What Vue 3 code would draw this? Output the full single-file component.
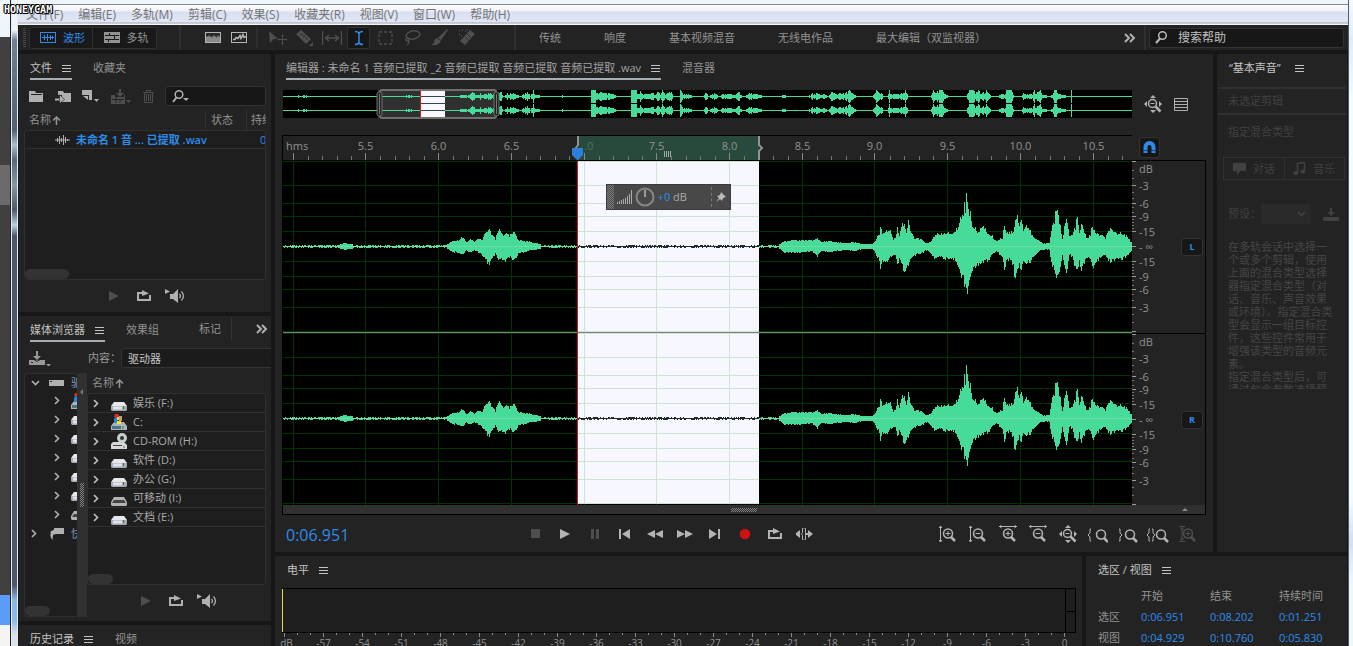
<script setup>
import { h, ref } from 'vue'

const menus = ['文件(F)', '编辑(E)', '多轨(M)', '剪辑(C)', '效果(S)', '收藏夹(R)', '视图(V)', '窗口(W)', '帮助(H)']
const workspaces = ['传统', '响度', '基本视频混音', '无线电作品', '最大编辑（双监视器）']
const search = ref('')
const fileFilter = ref('')

const glass = '<circle cx="9" cy="8.500" r="4.500" fill="none" stroke="currentColor" stroke-width="1.500"/><path d="M12 12l4 4" stroke="currentColor" stroke-width="2.500"/>'
const plus = '<path d="M6.500 8.500h5M9 6v5" stroke="currentColor" stroke-width="1"/>'
const minus = '<path d="M6.500 8.500h5" stroke="currentColor" stroke-width="1"/>'
const vArrow = '<path d="M1.500 1v16M0 3l1.500-2 1.500 2M0 15l1.500 2 1.500-2" fill="none" stroke="currentColor"/>'
const hArrow = '<path d="M0 1.500h18M2.500 0L.5 1.500l2 1.500M15.500 0l2 1.500-2 1.500" fill="none" stroke="currentColor"/>'
const fullZoom = '<path d="M6 3l3-3 3 3zM6 15l3 3 3-3zM3 6L0 9l3 3zM15 6l3 3-3 3z" fill="currentColor"/><circle cx="8.500" cy="8.500" r="4" fill="none" stroke="currentColor" stroke-width="1.500"/><path d="M6.500 8.500h4" stroke="currentColor"/><path d="M11.500 11.500l5 5" stroke="currentColor" stroke-width="2.500"/>'

const icons = {
  burger: [10, 9, '<path d="M0 1.500h9M0 4.500h9M0 7.500h9" stroke="currentColor"/>'],
  wave: [16, 11, '<rect x=".5" y=".5" width="15" height="10" fill="none" stroke="currentColor"/><path d="M2 5.500h12M4.500 3v5M7.500 2v7M10.500 3v5M12.500 4v3" stroke="currentColor"/>'],
  multi: [16, 11, '<path d="M0 0h16v11H0z" fill="currentColor"/><path d="M1 3.500h14M1 7.500h14M5.500 1v3M10.500 4v4M4.500 7v3" stroke="#191919"/>'],
  spectrum: [16, 11, '<rect x=".5" y=".5" width="15" height="10" fill="#8a8a8a" stroke="currentColor"/><path d="M1 1h14v3l-1 1-1-2-1 3-1-2-1 1-1-2-1 1-1 2-1-2-1 1-1-2-1 2-1-1-1 1z" fill="#2a2a2a"/>'],
  pitch: [16, 11, '<rect x=".5" y=".5" width="15" height="10" fill="none" stroke="currentColor"/><path d="M2 7.500h2l1-2 2 1 2-3 1 3 2-4 1 3 2-1" fill="none" stroke="currentColor" stroke-width="1.500"/>'],
  move: [18, 16, '<path d="M0 1l9 8H4.500L1 13z" fill="currentColor"/><path d="M13.500 5.500v8M9.500 9.500h8" stroke="currentColor"/><path d="M12 6l1.500-2L15 6zM12 13l1.500 2 1.500-2zM10 8L8.500 9.500 10 11zM17 8l1.500 1.500L17 11z" fill="currentColor"/>'],
  razor: [17, 17, '<path d="M0 5l5-4 10 9-5 5z" fill="currentColor"/><path d="M5 5l1 1M7.500 7l1 1M10 9l1 1" stroke="#222" stroke-width="1.500"/><path d="M17 13v4h-4z" fill="currentColor"/>'],
  slip: [20, 14, '<path d="M.5 0v14M19.500 0v14M3 7h14M7 4L3.500 7 7 10M13 4l3.500 3L13 10" fill="none" stroke="currentColor" stroke-width="1.400"/>'],
  ibeam: [10, 16, '<path d="M1 1.500q3.500 0 4 2 .5-2 4-2M1 14.500q3.500 0 4-2 .5 2 4 2M5 3v10" fill="none" stroke="currentColor" stroke-width="1.500"/>'],
  marquee: [16, 14, '<rect x="1" y="1" width="13" height="12" fill="none" stroke="currentColor" stroke-width="1.300" stroke-dasharray="3 2"/>'],
  lasso: [17, 15, '<ellipse cx="9" cy="5" rx="7" ry="4" fill="none" stroke="currentColor" stroke-width="1.500" transform="rotate(-12 9 5)"/><path d="M4 8q-4 2-1 3 3 0 1-3 2 5-1 7" fill="none" stroke="currentColor" stroke-width="1.300"/>'],
  brush: [17, 17, '<path d="M16 0l1 1-7 10-3-2z" fill="currentColor"/><path d="M6 9l4 3q-2 5-10 4 3-1 3-3 0-3 3-4z" fill="currentColor"/>'],
  heal: [18, 17, '<path d="M2 12L12 1l5 4L7 16z" fill="currentColor"/><path d="M7 7.500l4 4M9 5l4 4" stroke="#222" stroke-width=".7"/><path d="M1 2h1M4 1h1M7 2h1M1 5h1M3 7h1M9 1h1" stroke="currentColor" stroke-width="1.300"/>'],
  chevrons: [12, 10, '<path d="M1 1l4 4-4 4M6 1l4 4-4 4" fill="none" stroke="currentColor" stroke-width="2"/>'],
  search: [13, 13, '<circle cx="7.500" cy="4.500" r="3.800" fill="none" stroke="currentColor" stroke-width="1.500"/><path d="M5 7.500L1 12" stroke="currentColor" stroke-width="2"/>'],
  searchMenu: [18, 13, '<circle cx="7" cy="4.500" r="3.800" fill="none" stroke="currentColor" stroke-width="1.500"/><path d="M4.500 7.500L1 12" stroke="currentColor" stroke-width="2"/><path d="M11 8h6l-3 3z" fill="currentColor"/>'],
  folder: [15, 12, '<path d="M0 1h6l1 2h7v9H0z" fill="currentColor"/><path d="M2 4.500h11" stroke="#222"/>'],
  importFile: [16, 13, '<path d="M3 1h5l1 2h7v9H7V5H3z" fill="currentColor"/><path d="M0 9.500h6" stroke="currentColor" stroke-width="2"/><path d="M4.500 4.500l5 5-5 4z" fill="currentColor" stroke="#232323" stroke-width=".6"/>'],
  newFile: [18, 14, '<path d="M0 1h10v10H7V6H0z" fill="currentColor"/><path d="M1 7l5 4V7z" fill="currentColor"/><path d="M12 10h5l-2.500 3z" fill="currentColor"/>'],
  insert: [21, 15, '<path d="M0 6h4v2h9V6h1v9H0z" fill="currentColor"/><path d="M1 10.500h12M5 8v6M9 10v4" stroke="#222"/><path d="M8 0h2v4h3L9 8 5 4h3z" fill="currentColor"/><path d="M15 11h5l-2.500 3z" fill="currentColor"/>'],
  trash: [11, 13, '<path d="M0 2.500h11M3.500 2V.5h4V2M1.500 3v9.500h8V3M3.500 4v7M5.500 4v7M7.500 4v7" fill="none" stroke="currentColor"/>'],
  sound: [15, 12, '<path d="M0 6h15M2.500 4v4M4.500 2v8M6.500 4v4M8.500 1v10M10.500 3v6M12.500 5v2" stroke="currentColor" stroke-width="1"/>'],
  play: [10, 10, '<path d="M0 0l10 5-10 5z" fill="currentColor"/>'],
  stop: [9, 9, '<path d="M0 0h9v9H0z" fill="currentColor"/>'],
  pause: [9, 10, '<path d="M0 0h3v10H0zM5 0h3v10H5z" fill="currentColor"/>'],
  toStart: [12, 10, '<path d="M0 0h2v10H0zM11 0v10L3 5z" fill="currentColor"/>'],
  toEnd: [12, 10, '<path d="M9 0h2v10H9zM0 0v10l8-5z" fill="currentColor"/>'],
  rewind: [16, 8, '<path d="M8 0v8L0 4zM16 0v8L8 4z" fill="currentColor"/>'],
  forward: [16, 8, '<path d="M0 0v8l8-4zM8 0v8l8-4z" fill="currentColor"/>'],
  record: [12, 12, '<circle cx="6" cy="6" r="5.300" fill="#cc1313"/>'],
  loop: [14, 12, '<path d="M5 3H1v7h12V5" fill="none" stroke="currentColor" stroke-width="2"/><path d="M5 0l7 3.500L5 6z" fill="currentColor"/>'],
  skip: [18, 12, '<path d="M0 5l4-3v8L0 7zM12 2l5 4-5 4z" fill="currentColor"/><path d="M9 6h4" stroke="currentColor" stroke-width="2"/><path d="M7.500.5h-1v4L5.500 6l1 1.500v4h1M8.500.5h1v4l1 1.500-1 1.500v4h-1" fill="none" stroke="currentColor"/>'],
  speaker: [21, 14, '<path d="M0 0l5 2.500L0 5z" fill="currentColor"/><path d="M5 5h3l5-5v14l-5-4H5z" fill="currentColor"/><path d="M14.500 5q2 2 0 4M16.500 2.500q4 4.500 0 9" fill="none" stroke="currentColor" stroke-width="1.300"/>'],
  importDown: [22, 15, '<path d="M0 9h16v5H0z" fill="currentColor"/><path d="M2 11.500h2" stroke="#222"/><path d="M7 0h2v5h3L8 9 4 5h3z" fill="currentColor"/><path d="M3 8.500h2l3 2 3-2h2" stroke="#222" fill="none"/><path d="M17 13h5l-2.500 2.500z" fill="currentColor"/>'],
  saveDown: [16, 13, '<path d="M0 9h16v4H0z" fill="currentColor"/><path d="M7 0h2v4h3L8 8 4 4h3z" fill="currentColor"/>'],
  right: [6, 9, '<path d="M1 1l3.500 3.500L1 8" fill="none" stroke="currentColor" stroke-width="1.600"/>'],
  down: [9, 6, '<path d="M1 1l3.500 3.500L8 1" fill="none" stroke="currentColor" stroke-width="1.600"/>'],
  up: [9, 9, '<path d="M4.500 9V1M1 4.500L4.500 1 8 4.500" fill="none" stroke="currentColor" stroke-width="1.600"/>'],
  hdd: [15, 6, '<rect width="15" height="6" fill="currentColor"/><path d="M1 1.500h2" stroke="#222"/>'],
  shortcut: [14, 12, '<path d="M4 0h10v6H5z" fill="currentColor"/><path d="M0 4l5-3v6L4 6q-2 2-1 6-4-3-2-7z" fill="currentColor"/>'],
  drive: [16, 10, '<path d="M3 1h10l3 4H0z" fill="#e8e8ec"/><path d="M0 5h16v4l-1 1H1L0 9z" fill="#a9a9ad"/><path d="M2 5.500h9v3H2z" fill="#dfe2f4"/><path d="M12.500 5v3" stroke="#278b58"/>'],
  system: [16, 16, '<path d="M3 8h10l3 4v4H0v-4z" fill="#aeb4b8"/><path d="M1 12h9v3H1z" fill="#44758f"/><path d="M12 12v3" stroke="#3f7a64"/><path d="M3 9V5l2-3 3 7z" fill="#2985e0"/><path d="M4 0h3l2 3H3z" fill="#e32c20"/><path d="M6 3h2v3H6z" fill="#f5d531"/><path d="M8 2h3v5H8z" fill="#bba379"/><path d="M6 7h4v3H6z" fill="#ffe318"/>'],
  cdrom: [16, 16, '<path d="M2 9h11l3 3v4H0v-5z" fill="#d8d8d8"/><circle cx="11" cy="5" r="5" fill="#c9cccc"/><circle cx="11" cy="5" r="2" fill="#233a30"/><path d="M2 12.500h9" stroke="#444"/><path d="M12 14h2" stroke="#278b58"/>'],
  removable: [16, 10, '<path d="M3 1h10l3 5v3l-1 1H1L0 9V6z" fill="#b2b2b2"/><path d="M3 4h10l2 3H1z" fill="#444"/>'],
  zoomInV: [18, 18, vArrow + glass + plus],
  zoomOutV: [18, 18, vArrow + glass + minus],
  zoomInH: [18, 18, hArrow + glass + plus],
  zoomOutH: [18, 18, hArrow + glass + minus],
  zoomFull: [18, 18, fullZoom],
  zoomLeft: [20, 18, '<path d="M3 4H2v4L0 10l2 2v4h1" fill="none" stroke="currentColor"/><g transform="translate(4 1)">' + glass + '</g>'],
  zoomRight: [20, 18, '<path d="M1 4h1v4l2 2-2 2v4H1" fill="none" stroke="currentColor"/><g transform="translate(3 1)">' + glass + '</g>'],
  zoomSel: [22, 18, '<path d="M3 4H2v4L0 10l2 2v4h1M5 4h1v4l2 2-2 2v4H5" fill="none" stroke="currentColor"/><g transform="translate(5 1)">' + glass + '</g>'],
  zoomReset: [18, 18, '<path d="M0 1.500h6M0 16.500h6M3 2v14M1.500 5L3 3l1.500 2M1.500 13L3 15l1.500-2" fill="none" stroke="currentColor"/>' + glass + plus],
  list: [14, 13, '<path d="M.5.5h13v12H.5zM0 3.500h14M0 6.500h14M0 9.500h14" fill="none" stroke="currentColor"/>'],
  magnet: [13, 13, '<path d="M2.500 12V6a4 4 0 018 0v6" fill="none" stroke="currentColor" stroke-width="4"/><path d="M0 9.500h5M8 9.500h5" stroke="#173f73" stroke-width="1"/>'],
  bubble: [13, 12, '<path d="M0 0h13v8H7l-3 4V8H0z" fill="currentColor"/>'],
  note: [13, 13, '<path d="M4.500 11V1.500l7-1V9" fill="none" stroke="currentColor" stroke-width="1.500"/><ellipse cx="2.800" cy="11" rx="2.600" ry="2" fill="currentColor"/><ellipse cx="9.800" cy="9.500" rx="2.600" ry="2" fill="currentColor"/>'],
  bars: [15, 14, '<path d="M.5 12v2M2.500 11v3M4.500 10v4M6.500 9v5M8.500 8v6M10.500 6v8M12.500 4v10M14.500 0v14" stroke="currentColor"/>'],
  knob: [20, 20, '<circle cx="10" cy="10" r="8.500" fill="none" stroke="#888" stroke-width="2"/><path d="M10 3v7" stroke="#999" stroke-width="2"/>'],
  pin: [10, 10, '<path d="M5 0l5 5-2 .5-1.500 1.500-.5 2-2-2-4 3 3-4-2-2 2-.5L4.500 2z" fill="currentColor"/>'],
}

const Icon = (props) => {
  const [w, ht, body] = icons[props.name]
  return h('svg', { class: 'icon', width: w, height: ht, viewBox: `0 0 ${w} ${ht}`, 'aria-hidden': 'true', innerHTML: body })
}
Icon.props = ['name']

const tools = ['move', 'razor', 'slip', 'ibeam', 'marquee', 'lasso', 'brush', 'heal']
const drives = [
  ['drive', '娱乐 (F:)'], ['system', 'C:'], ['cdrom', 'CD-ROM (H:)'], ['drive', '软件 (D:)'],
  ['drive', '办公 (G:)'], ['removable', '可移动 (I:)'], ['drive', '文档 (E:)'],
]
const treeDrives = ['system', 'drive', 'drive', 'drive', 'drive', 'drive', 'removable']
const transport = [
  ['stop', '停止', true], ['play', '播放'], ['pause', '暂停', true], ['toStart', '移到开头'], ['rewind', '快退'],
  ['forward', '快进'], ['toEnd', '移到结尾'], ['record', '录制'], ['loop', '循环'], ['skip', '跳过选区'],
]
const zooms = [
  ['zoomInV', '放大振幅'], ['zoomOutV', '缩小振幅'], ['zoomInH', '放大时间'], ['zoomOutH', '缩小时间'], ['zoomFull', '全部缩小'],
  ['zoomLeft', '放大入点'], ['zoomRight', '放大出点'], ['zoomSel', '缩放至选区'], ['zoomReset', '重置缩放', true],
]
const helpLines = [
  '在多轨会话中选择一', '个或多个剪辑，使用', '上面的混合类型选择', '器指定混合类型（对', '话、音乐、声音效果',
  '或环境）。指定混合类', '型会显示一组目标控', '件，这些控件常用于', '增强该类型的音频元', '素。', '指定混合类型后，可', '通过包含参数选择预',
]
const ranges = [
  ['选区', '0:06.951', '0:08.202', '0:01.251'],
  ['视图', '0:04.929', '0:10.760', '0:05.830'],
]

/* Time axis, 849 units wide */
const W = 849
const X0 = 283
const gridX = [293, 365, 438, 511, 584, 656, 729, 802, 874, 947, 1020, 1093].map((x) => x - X0 + 0.5)
const timeLabels = gridX.map((x, i) => ({ x, text: (5 + i / 2).toFixed(1) })).slice(1).filter((t) => t.text !== '7.0')
const minorX = []
for (let i = 1; i < 58; i++) if (i % 5) minorX.push(Math.round(10 + i * 14.55) + 0.5)
const pct = (x) => `${(x / W) * 100}%`

/* Amplitude axis */
const gridDb = [-85, -61, -43, -30, -15, 0, 15, 30, 43, 61, 85]
const dbLabels = [[-77, 'dB'], [-60, '-3'], [-42, '-6'], [-29, '-9'], [-14, '-15'], [1, '- ∞'], [16, '-15'], [31, '-9'], [44, '-6'], [62, '-3']]
const dbMinor = [-76, -68, -54, -48, -39, -34, -27, -24, -21, -18, 18, 21, 24, 27, 34, 39, 48, 54, 68, 76]

const envelope = [
  [283, 1, 1], [335, 1, 1], [340, 2, 2], [345, 3, 3], [352, 2, 2], [362, 1, 1], [442, 1, 1], [447, 2, 2], [452, 5, 5], [458, 6, 6],
  [462, 9, 9], [466, 4, 4], [470, 7, 6], [474, 4, 3], [478, 8, 6], [481, 6, 7], [484, 11, 11], [488, 17, 18], [491, 13, 14], [495, 7, 7],
  [498, 17, 14], [500, 15, 12], [503, 12, 14], [505, 14, 16], [509, 10, 10], [512, 13, 12], [515, 13, 13], [518, 7, 6], [522, 5, 6],
  [528, 5, 4], [535, 3, 3], [545, 1, 1], [577, 1, 1], [775, 1, 1], [779, 2, 2], [784, 5, 6], [788, 6, 6], [800, 6, 6], [812, 6, 5],
  [817, 8, 9], [820, 5, 5], [830, 5, 5], [845, 3, 3], [855, 4, 4], [862, 2, 2], [872, 2, 2], [874, 4, 4], [877, 10, 11], [879, 13, 13],
  [880, 22, 26], [882, 14, 15], [886, 17, 16], [890, 16, 11], [893, 7, 9], [895, 9, 9], [897, 19, 18], [899, 12, 12], [901, 22, 19],
  [904, 24, 26], [906, 14, 20], [908, 24, 20], [911, 13, 11], [915, 8, 8], [920, 7, 7], [927, 3, 3], [931, 5, 8], [935, 13, 13],
  [940, 11, 10], [945, 14, 13], [952, 12, 12], [955, 16, 14], [957, 18, 18], [959, 27, 24], [961, 31, 30], [963, 34, 31], [964, 42, 38],
  [965, 34, 36], [966, 60, 50], [967, 53, 50], [968, 37, 49], [969, 31, 35], [970, 37, 32], [972, 22, 24], [976, 16, 20], [980, 18, 16],
  [985, 19, 15], [988, 12, 15], [991, 11, 8], [996, 5, 4], [1002, 9, 10], [1004, 23, 24], [1006, 15, 13], [1010, 14, 14], [1013, 16, 19],
  [1015, 29, 37], [1017, 31, 22], [1019, 22, 18], [1021, 26, 24], [1023, 18, 15], [1026, 22, 16], [1030, 15, 15], [1034, 8, 8],
  [1038, 6, 5], [1042, 3, 3], [1049, 3, 3], [1051, 17, 17], [1054, 27, 24], [1056, 38, 37], [1058, 30, 30], [1060, 20, 20], [1062, 8, 8],
  [1065, 26, 26], [1067, 24, 22], [1069, 10, 8], [1072, 12, 11], [1075, 20, 24], [1077, 30, 24], [1079, 13, 13], [1081, 23, 26],
  [1084, 14, 17], [1087, 8, 10], [1090, 11, 12], [1092, 22, 21], [1095, 13, 15], [1100, 12, 11], [1105, 8, 9], [1109, 18, 15],
  [1113, 14, 14], [1118, 13, 12], [1123, 14, 12], [1127, 9, 9], [1131, 4, 4],
]
const overview = [
  [283, 0.5], [290, 1], [305, 1.5], [310, 0.5], [352, 1], [366, 1], [376, 0.5], [403, 0.5], [409, 2], [414, 0.5], [445, 0.5], [458, 1],
  [462, 3], [467, 2], [473, 5], [476, 2], [480, 4], [483, 2], [487, 4], [492, 3], [497, 3], [500, 6], [503, 1], [507, 4], [514, 4],
  [520, 1], [527, 5], [530, 2], [533, 7], [535, 3], [540, 1], [560, 0.5], [563, 2], [566, 0.5], [590, 0.5], [591, 7], [595, 7], [596, 4],
  [601, 6], [605, 4], [612, 4], [616, 1], [630, 1], [631, 7], [636, 7], [637, 4], [640, 6], [644, 3], [648, 3], [651, 5], [654, 3], [658, 6],
  [660, 3], [662, 7], [665, 4], [671, 5], [673, 1], [679, 1], [680, 7], [683, 3], [690, 2], [694, 1], [703, 0.5], [706, 5], [709, 1],
  [715, 4], [718, 1], [724, 3], [733, 3], [739, 5], [742, 1], [745, 1], [748, 4], [752, 4], [757, 3], [763, 1], [780, 0.5], [784, 3],
  [788, 0.5], [808, 0.5], [812, 4], [820, 3], [825, 3], [828, 1], [832, 6], [835, 3], [838, 3], [842, 5], [844, 3], [849, 7], [853, 4],
  [856, 1], [870, 0.5], [874, 3], [876, 7], [880, 5], [883, 1], [887, 1], [889, 7], [891, 3], [896, 5], [899, 2], [902, 4], [905, 7],
  [908, 1], [930, 0.5], [933, 7], [936, 6], [939, 7], [942, 7], [945, 3], [950, 1], [966, 0.5], [969, 7], [973, 7], [975, 5], [978, 7],
  [981, 3], [986, 7], [989, 3], [992, 1], [998, 1], [1001, 4], [1004, 2], [1006, 7], [1011, 7], [1013, 2], [1015, 0.5], [1021, 1],
  [1023, 4], [1032, 3], [1034, 7], [1036, 4], [1040, 7], [1042, 3], [1048, 1], [1052, 2], [1054, 7], [1056, 7], [1058, 3], [1063, 2],
  [1068, 0.5], [1070, 1], [1071, 7], [1072, 0.5], [1131, 0.5],
]
const jitter = (n) => { const v = Math.sin(n * 12.9898) * 43758.5453; return v - Math.floor(v) }
function at(points, x, k) {
  let i = 1
  while (i < points.length - 1 && points[i][0] < x) i++
  const a = points[i - 1]
  const b = points[i]
  return a[k] + (b[k] - a[k]) * Math.min(1, Math.max(0, (x - a[0]) / (b[0] - a[0])))
}
function reach(v, n) {
  if (v < 2) return Math.round(jitter(n) * 0.9)
  return Math.round(v * (0.8 + jitter(n) * 0.28))
}
function wavePath(from, to, cy) {
  let d = ''
  for (let x = from; x <= to; x++) {
    d += `M${x - X0 + 0.5} ${cy - reach(at(envelope, x, 1), x)}V${cy + 1 + reach(at(envelope, x, 2), x + 77)}`
  }
  return d
}
function overviewPath(cy) {
  let d = ''
  for (let x = 283; x < 1132; x++) {
    const v = at(overview, x, 1)
    const a = v >= 6.8 ? 6.5 : 0.5 + Math.round(Math.max(0, v * (0.5 + jitter(x * 3) * 0.5) - 0.7))
    d += `M${x - X0 + 0.5} ${cy - a}V${cy + a}`
  }
  return d
}
const channels = [85, 257]
const waves = channels.map((c) => ({
  c,
  left: wavePath(283, 576, c),
  mid: wavePath(578, 758, c),
  right: wavePath(759, 1131, c),
}))
const overviewPaths = [overviewPath(6.5), overviewPath(20.5)]

/* Level meter axis */
const levelTicks = []
for (let i = 0; i <= 60; i++) levelTicks.push({ x: 2.5 + i * 13, major: i % 3 === 0 })
const levelLabels = []
for (let i = 0; i <= 20; i++) levelLabels.push({ x: 2.5 + i * 39 + (i === 0 ? 2 : 0), text: i === 0 ? 'dB' : i === 20 ? '0' : String(-60 + i * 3) })
</script>

<template>
  <div class="desktop">
    <div class="behind"></div>
    <div class="edge"></div>
    <div class="app">
      <nav class="menubar">
        <button v-for="m in menus" :key="m">{{ m }}</button>
      </nav>

      <header class="toolbar">
        <i class="grip"></i>
        <div class="modes">
          <button class="mode on"><Icon name="wave" />波形</button>
          <button class="mode"><Icon name="multi" />多轨</button>
        </div>
        <i class="bar first"></i>
        <button class="view" aria-label="频谱"><Icon name="spectrum" /></button>
        <button class="view" aria-label="音高"><Icon name="pitch" /></button>
        <i class="bar second"></i>
        <div class="tools">
          <button v-for="t in tools" :key="t" :class="{ on: t === 'ibeam' }" :aria-label="t"><Icon :name="t" /></button>
        </div>
        <i class="bar"></i>
        <nav class="spaces">
          <button v-for="w in workspaces" :key="w">{{ w }}</button>
        </nav>
        <button class="more" aria-label="更多工作区"><Icon name="chevrons" /></button>
        <i class="bar"></i>
        <label class="help"><Icon name="search" /><input v-model="search" placeholder="搜索帮助" aria-label="搜索帮助"></label>
      </header>

      <div class="workspace">
        <aside class="left">
          <section class="panel files">
            <div class="tabs">
              <div class="tab on"><button>文件</button><Icon name="burger" /></div>
              <div class="tab"><button>收藏夹</button></div>
            </div>
            <div class="filebar">
              <button aria-label="打开"><Icon name="folder" /></button>
              <button aria-label="导入"><Icon name="importFile" /></button>
              <button aria-label="新建"><Icon name="newFile" /></button>
              <button class="off" aria-label="插入"><Icon name="insert" /></button>
              <button class="off" aria-label="删除"><Icon name="trash" /></button>
              <label class="filter"><Icon name="searchMenu" /><input v-model="fileFilter" aria-label="筛选文件"></label>
            </div>
            <div class="cols"><span class="name">名称<Icon name="up" /></span><span class="c2">状态</span><span class="c3">持续</span></div>
            <div class="box filelist">
              <div class="file"><Icon name="sound" /><span>未命名 1 音 ... 已提取 .wav</span><em>0</em></div>
              <i class="thumb wide"></i>
            </div>
            <div class="preview">
              <button class="off" aria-label="播放"><Icon name="play" /></button>
              <button aria-label="循环"><Icon name="loop" /></button>
              <button aria-label="自动播放"><Icon name="speaker" /></button>
            </div>
          </section>

          <section class="panel media">
            <div class="tabs">
              <div class="tab on"><button>媒体浏览器</button><Icon name="burger" /></div>
              <div class="tab"><button>效果组</button></div>
              <div class="tab marks"><button>标记</button></div>
              <button class="tabmore" aria-label="更多"><Icon name="chevrons" /></button>
            </div>
            <div class="content">
              <button aria-label="导入"><Icon name="importDown" /></button>
              <label for="content">内容：</label>
              <select id="content"><option>驱动器</option></select>
            </div>
            <div class="browser">
              <div class="box tree">
                <div class="node root"><Icon name="down" /><Icon name="hdd" /><span>驱</span></div>
                <div v-for="(d, i) in treeDrives" :key="i" class="node child"><Icon name="right" /><Icon :name="d" /></div>
                <div class="node root quick"><Icon name="right" /><Icon name="shortcut" /><span>快</span></div>
                <i class="thumb"></i>
              </div>
              <div class="split"><i class="tri"></i><i class="dots"></i></div>
              <div class="right">
                <div class="cols"><span class="name">名称<Icon name="up" /></span></div>
                <div class="box drives">
                  <div v-for="[ic, label] in drives" :key="label" class="drive"><Icon name="right" /><span class="dicon"><Icon :name="ic" /></span>{{ label }}</div>
                  <i class="thumb"></i>
                </div>
                <div class="preview">
                  <button class="off" aria-label="播放"><Icon name="play" /></button>
                  <button aria-label="循环"><Icon name="loop" /></button>
                  <button aria-label="自动播放"><Icon name="speaker" /></button>
                </div>
              </div>
            </div>
          </section>

          <section class="panel history">
            <div class="tabs">
              <div class="tab on"><button>历史记录</button><Icon name="burger" /></div>
              <div class="tab"><button>视频</button></div>
            </div>
          </section>
        </aside>

        <div class="rest">
          <div class="upper">
            <main class="panel editor">
              <div class="tabs">
                <div class="tab on"><button>编辑器 : 未命名 1 音频已提取 _2 音频已提取 音频已提取 音频已提取 .wav</button><Icon name="burger" /></div>
                <div class="tab"><button>混音器</button></div>
              </div>
              <div class="overview">
                <div class="mini">
                  <svg viewBox="0 0 849 28" preserveAspectRatio="none" shape-rendering="crispEdges" aria-hidden="true">
                    <rect width="849" height="28" fill="#000" />
                    <rect x="95" width="119" height="28" fill="#303030" />
                    <path v-for="(p, i) in overviewPaths" :key="i" :d="p" stroke="#47db9a" />
                    <rect x="138" y="1" width="24" height="26" fill="#f7f8ff" />
                    <path d="M138 6.500h24M138 13.500h24M138 20.500h24" stroke="#39434a" />
                    <path d="M137.500 1v26" stroke="#e01515" />
                    <g shape-rendering="auto">
                      <rect x="97" y="0" width="116" height="28" rx="2" fill="none" stroke="#707070" stroke-width="2" />
                      <rect x="94" y="2" width="5" height="24" rx="2" fill="#222" stroke="#707070" />
                      <rect x="211" y="2" width="5" height="24" rx="2" fill="#222" stroke="#707070" />
                      <path d="M96.500 4v20M213.500 4v20" stroke="#777" />
                    </g>
                  </svg>
                </div>
                <div class="miniside"><button aria-label="全部缩小"><Icon name="zoomFull" /></button><button aria-label="列表"><Icon name="list" /></button></div>
              </div>

              <div class="stage">
                <div class="ruler">
                  <svg viewBox="0 0 849 24" preserveAspectRatio="none" aria-hidden="true">
                    <rect x="295" width="181" height="24" fill="#284a3c" />
                    <path v-for="x in gridX" :key="x" :d="`M${x} 17v7`" stroke="#888" />
                    <path v-for="x in minorX" :key="x" :d="`M${x} 20v4`" stroke="#777" />
                    <path d="M381.500 15v6M383.500 15v6M385.500 15v6M387.500 15v6" stroke="#a0a8a4" />
                    <path d="M295 0v9l-3 4M476 0v9l3 3-3 3v9" fill="none" stroke="#929292" stroke-width="2" />
                    <path d="M289 12h11v7l-5 5h-1l-5-5z" fill="#2b80dc" />
                  </svg>
                  <span class="hms">hms</span>
                  <span class="cut" :style="{ left: pct(301) }">.0</span>
                  <span v-for="t in timeLabels" :key="t.text" class="time" :style="{ left: pct(t.x) }">{{ t.text }}</span>
                </div>
                <div class="snap"><button aria-label="对齐"><Icon name="magnet" /></button></div>

                <div class="wave">
                  <svg viewBox="0 0 849 344" preserveAspectRatio="none" shape-rendering="crispEdges" aria-hidden="true">
                    <rect width="849" height="344" fill="#000" />
                    <g stroke="#003300">
                      <path v-for="x in gridX" :key="x" :d="`M${x} 0v344`" />
                      <template v-for="c in channels" :key="c"><path v-for="g in gridDb" :key="g" :d="`M0 ${c + g + 0.5}h849`" /></template>
                    </g>
                    <rect x="295" width="181" height="343" fill="#f7f8ff" />
                    <g stroke="#cfe3d1">
                      <path d="M301.500 0v343M373.500 0v343M446.500 0v343" />
                      <template v-for="c in channels" :key="c"><path v-for="g in gridDb" :key="g" :d="`M295 ${c + g + 0.5}h181`" /></template>
                    </g>
                    <template v-for="w in waves" :key="w.c">
                      <path :d="w.left" stroke="#47db9a" /><path :d="w.right" stroke="#47db9a" />
                      <path :d="w.mid" stroke="#222b28" />
                      <path :d="`M0 ${w.c + 0.5}h295M476 ${w.c + 0.5}h373`" stroke="#70dca0" />
                      <path :d="`M295 ${w.c + 0.5}h181`" stroke="#222b28" />
                    </template>
                    <path d="M0 171.500h849" stroke="#808080" />
                    <path d="M294.500 0v344" stroke="#d81818" />
                  </svg>
                  <div class="hud">
                    <i class="hudgrip"></i><Icon name="bars" /><Icon name="knob" /><span><b>+0</b> dB</span><button aria-label="固定"><Icon name="pin" /></button>
                  </div>
                </div>

                <div class="scale">
                  <div v-for="ch in ['L', 'R']" :key="ch" class="chan">
                    <svg width="40" height="172" aria-hidden="true">
                      <path v-for="g in gridDb" :key="g" :d="`M0 ${85 + g + 0.5}h4`" stroke="#999" />
                      <path v-for="g in dbMinor" :key="g" :d="`M0 ${85 + g + 0.5}h2`" stroke="#777" />
                      <text v-for="([y, t], k) in dbLabels" :key="k" x="7" :y="85 + y + 4">{{ t }}</text>
                    </svg>
                    <button>{{ ch }}</button>
                  </div>
                </div>
              </div>
              <div class="hscroll"><i class="dots"></i><i class="tri"></i></div>

              <div class="transport">
                <output>0:06.951</output>
                <div class="group"><button v-for="[ic, label, off] in transport" :key="ic" :class="{ off }" :aria-label="label"><Icon :name="ic" /></button></div>
                <div class="group zooms"><button v-for="[ic, label, off] in zooms" :key="ic" :class="{ off }" :aria-label="label"><Icon :name="ic" /></button></div>
              </div>
            </main>

            <aside class="panel sound">
              <div class="tabs"><div class="tab"><button class="lit">“基本声音”</button><Icon name="burger" /></div></div>
              <div class="state">未选定剪辑</div>
              <div class="kind">指定混合类型</div>
              <div class="types"><button><Icon name="bubble" />对话</button><button><Icon name="note" />音乐</button></div>
              <div class="preset"><label for="preset">预设：</label><span class="pick"><select id="preset"><option></option></select><Icon name="down" /></span><button aria-label="保存预设"><Icon name="saveDown" /></button></div>
              <p><span v-for="l in helpLines" :key="l">{{ l }}</span></p>
            </aside>
          </div>

          <div class="lower">
            <section class="panel levels">
              <div class="title">电平<Icon name="burger" /></div>
              <div class="meter"><i class="yellow"></i><div class="peak"><i></i><i></i></div></div>
              <div class="axis">
                <svg viewBox="0 0 794 14" preserveAspectRatio="none" aria-hidden="true"><path v-for="t in levelTicks" :key="t.x" :d="`M${t.x} 0v${t.major ? 4 : 2}`" stroke="#888" /></svg>
                <span v-for="t in levelLabels" :key="t.x" :style="{ left: `${t.x / 7.94}%` }">{{ t.text }}</span>
              </div>
            </section>
            <section class="panel range">
              <div class="title">选区 / 视图<Icon name="burger" /></div>
              <table>
                <thead><tr><th></th><th>开始</th><th>结束</th><th>持续时间</th></tr></thead>
                <tbody><tr v-for="r in ranges" :key="r[0]"><th>{{ r[0] }}</th><td v-for="v in r.slice(1)" :key="v">{{ v }}</td></tr></tbody>
              </table>
            </section>
          </div>
        </div>
      </div>
    </div>
    <div class="outside"></div>
    <div class="mark">HONEYCAM</div>
  </div>
</template>

<style>
html, body { margin: 0; overflow: hidden; }
</style>

<style scoped>
* { box-sizing: border-box; }
button, input, select, output { font: inherit; color: inherit; background: none; border: 0; padding: 0; margin: 0; white-space: nowrap; }
button { display: flex; align-items: center; justify-content: center; }
select { appearance: none; }
input { min-width: 0; outline: 0; }
i { display: block; font-style: normal; flex: none; }
.icon { display: block; flex: none; }

.desktop {
  height: 100vh; display: grid; grid-template-columns: 11px 7px minmax(0, 1fr) 5px; padding-top: 4px; overflow: hidden; position: relative;
  background: #eef6fb; color: #929292; font: 11px/20px "Open Sans", "Noto Sans CJK SC", sans-serif;
}
.behind { margin-top: -4px; border-right: 1px solid #222; background: linear-gradient(#eef5fb 0 37px, #404040 37px 165px, #6b6b6b 165px 205px, #404040 205px 595px, #5a9cf8 595px 625px, #f4f4f4 625px); }
.edge { margin-top: -4px; border: solid #e6ebef; border-width: 0 1px; background: linear-gradient(#edf4fa 0 30px, #6d8294 40px, #506173 130px, #a8c2cb 145px, #57687a 160px, #829ba5 185px, #4c5868 210px, #b7d3e4 225px, #4b5768 236px 585px, #8cb8e4 600px 620px, #d9e3ec 635px); }
.outside { margin-top: -4px; border-left: 1px solid #47606b; background: linear-gradient(#f3faff, #e1edf5 40px, #f4fafd 100px 500px, #d4dff0 540px, #f0f5fa 580px); }
.app { display: flex; flex-direction: column; min-width: 0; min-height: 0; background: #171717; border-top: 1px solid #818990; }
.mark { position: absolute; left: 4px; top: 3px; font: bold 10px/13px "DejaVu Sans Mono", monospace; color: #fff; text-shadow: 1px 0 #000, -1px 0 #000, 0 1px #000, 0 -1px #000, 1px 1px #000, -1px -1px #000; }

.menubar { height: 20px; flex: none; display: flex; gap: 15px; padding-left: 8px; font-size: 12px; color: #747474; background: linear-gradient(#fff, #eff2f9 6px, #d9dff0 7px, #e2e7f5 17px, #9fa6b0 18px, #f4f6f8 19px); }

.toolbar { height: 25px; flex: none; display: flex; align-items: center; background: #232323; margin-left: 1px; padding-left: 4px; }
.grip { width: 3px; height: 19px; background: repeating-linear-gradient(#484848 0 1px, #232323 1px 2px); }
.modes { display: flex; margin-left: 3px; border: 1px solid #303030; border-radius: 3px; background: #191919; }
.mode { height: 20px; width: 63px; gap: 7px; padding-left: 3px; }
.mode.on { color: #2d8ceb; border-right: 1px solid #303030; }
.bar { width: 2px; height: 25px; background: #2f2f2f; }
.bar.first { margin: 0 19px 0 22px; }
.view { width: 26px; color: #b4b4b4; }
.bar.second { margin-left: 4px; height: 20px; }
.tools { display: flex; align-items: center; color: #4f4f4f; margin: 0 34px 0 6px; }
.tools button { width: 27px; height: 22px; }
.tools .on { color: #2d8ceb; background: #171717; border: 1px solid #333; border-radius: 3px; width: 23px; margin: 0 2px; }
.spaces { display: flex; gap: 43px; margin-left: 23px; }
.more { margin-left: auto; margin-right: 8px; color: #b0b0b0; }
.help { flex: 0 0 195px; height: 20px; display: flex; align-items: center; gap: 10px; margin: 0 4px 0 3px; padding: 0 5px; background: #171717; border: 1px solid #333; border-radius: 3px; color: #b8b8b8; font-size: 12px; }
.help input { flex: 1; line-height: 16px; }
.help input::placeholder { color: #c0c0c0; opacity: 1; }

.workspace { flex: 1; min-height: 0; display: flex; gap: 4px; padding: 4px 1px 0; }
.panel { background: #232323; min-width: 0; overflow: hidden; }
.left { flex: 0 0 252px; display: flex; flex-direction: column; gap: 4px; min-height: 0; }
.tabs { display: flex; height: 26px; flex: none; padding-left: 11px; gap: 21px; }
.tab { display: flex; align-items: center; gap: 10px; height: 26px; padding-top: 4px; padding-bottom: 2px; }
.tab.on { border-bottom: 2px solid #a7adb3; color: #c4c4c4; padding-bottom: 0; }
.tab svg { color: #c4c4c4; }

.files { flex: 258 1 0; display: flex; flex-direction: column; }
.filebar { display: flex; align-items: center; height: 20px; margin: 6px 5px 0 10px; gap: 11px; color: #b0b0b0; }
.off { color: #4e4e4e; }
.filter { margin-left: auto; width: 101px; height: 20px; display: flex; align-items: center; background: #171717; border: 1px solid #333; border-radius: 3px; padding-left: 6px; }
.filter input { flex: 1; }
.cols { display: flex; height: 20px; flex: none; }
.files .cols { margin: 4px 5px 0; padding-left: 5px; }
.cols .name { display: flex; align-items: center; gap: 1px; flex: 1; }
.c2 { border-left: 1px solid #303030; padding-left: 5px; width: 41px; white-space: nowrap; }
.c3 { border-left: 1px solid #303030; padding-left: 4px; width: 20px; white-space: nowrap; overflow: hidden; }
.box { background: #1e1e1e; border: 1px solid #303030; border-radius: 3px; overflow: hidden; position: relative; }
.filelist { flex: 1; margin: 0 5px; }
.file { height: 18px; line-height: 18px; display: flex; align-items: center; border-bottom: 1px solid #303030; padding-left: 30px; color: #2d8ceb; white-space: nowrap; font-weight: 600; }
.file svg { color: #b0b0b0; margin-right: 6px; }
.file em { font-style: normal; font-weight: 400; margin-left: auto; width: 5px; overflow: hidden; }
.thumb { position: absolute; left: 0; bottom: 0; width: 25px; height: 10px; border-radius: 5px; background: #333; }
.thumb.wide { width: 44px; }
.preview { height: 32px; flex: none; display: flex; align-items: center; justify-content: center; gap: 18px; padding-left: 5px; color: #b0b0b0; }
.preview button:last-child { margin-left: -4px; }

.media { flex: 305 1 0; display: flex; flex-direction: column; }
.marks { margin-left: 19px; padding-right: 10px; border-right: 1px solid #333; height: 22px; margin-top: 2px; }
.media .tab.marks { padding-top: 2px; }
.tabmore { margin-left: auto; padding-right: 3px; color: #b0b0b0; }
.content { display: flex; align-items: center; height: 20px; flex: none; margin-top: 6px; padding-left: 10px; color: #999; }
.content label { margin-left: 37px; }
.content select { flex: 1; height: 20px; background: #1b1b1b; border: 1px solid #333; border-right: 0; border-radius: 3px 0 0 3px; padding-left: 6px; color: #c4c4c4; }
.browser { flex: 1; min-height: 0; display: flex; padding: 5px 5px 4px; }
.tree { flex: 0 0 53px; border-right: 0; }
.node { display: flex; align-items: center; height: 19px; white-space: nowrap; color: #b0b0b0; }
.tree .root { padding-left: 6px; gap: 9px; height: 17px; }
.tree .root span { margin-left: -2px; color: #7796b8; }
.tree .quick { gap: 9px; height: 19px; }
.tree .quick .icon:first-child { margin-right: 4px; }
.tree .child { padding-left: 29px; gap: 11px; }
.split { flex: 0 0 10px; background: #303030; position: relative; display: flex; align-items: center; justify-content: center; }
.split .tri { position: absolute; top: 16px; left: 3px; border: 3px solid transparent; border-right-color: #777; border-left: 0; }
.dots { width: 4px; height: 24px; background: repeating-conic-gradient(#808080 0 25%, #303030 0 50%) 0 0 / 2px 2px; }
.right { flex: 1; min-width: 0; display: flex; flex-direction: column; }
.right .cols { padding-left: 5px; }
.drives { flex: 1; }
.drive { display: flex; align-items: center; height: 19px; border-bottom: 1px solid #303030; padding-left: 5px; color: #aaa; }
.drive > svg { color: #c0c0c0; }
.dicon { width: 16px; height: 16px; display: flex; align-items: flex-end; margin: 0 6px 0 12px; }
.history { flex: 0 0 21px; }

.rest { flex: 1; min-width: 0; display: flex; flex-direction: column; gap: 4px; }
.upper { flex: 1; min-height: 0; display: flex; gap: 4px; }
.editor { flex: 1; display: flex; flex-direction: column; padding: 0 7px; }
.editor .tabs { padding-left: 4px; }
.editor .tab.on { color: #a4a4a4; }
.overview { display: grid; grid-template-columns: minmax(0, 1fr) 74px; margin: 10px 0 0 1px; height: 28px; flex: none; }
.mini svg, .ruler svg, .wave > svg, .axis svg { display: block; width: 100%; height: 100%; overflow: visible; }
.miniside { display: flex; align-items: center; gap: 12px; padding-left: 12px; color: #b0b0b0; }
.stage { flex: 1; min-height: 0; display: grid; grid-template: 26px minmax(0, 1fr) / minmax(0, 1fr) 74px; margin-top: 17px; border-left: 1px solid #000; }
.ruler { position: relative; border: solid #000; border-width: 1px 0; }
.hms, .time, .cut { position: absolute; top: 0; color: #929292; }
.hms { left: 3px; }
.time { transform: translateX(-50%); }
.cut { color: #567066; }
.snap { padding: 2px 0 0 7px; border-bottom: 1px solid #000; }
.snap button { width: 21px; height: 21px; background: #171717; border: 1px solid #333; border-radius: 3px; color: #2d8ceb; }
.wave { position: relative; min-height: 0; }
.hud { position: absolute; left: 38%; top: 23px; width: 125px; height: 26px; display: flex; align-items: center; background: #484848; border: 1px solid #3b3b3b; gap: 3px; color: #aaa; white-space: nowrap; }
.hud b { color: #2d8ceb; font-weight: 400; }
.hudgrip { width: 7px; height: 24px; background: repeating-conic-gradient(#777 0 25%, #505050 0 50%) 0 0 / 2px 2px; }
.hud button { margin-left: auto; height: 20px; padding: 0 4px; border-left: 1px dashed #777; color: #bbb; }
.scale { border: solid #000; border-width: 0 1px 0 0; display: grid; grid-template-rows: 1fr 1fr; min-height: 0; background: #232323; }
.chan { position: relative; min-height: 0; display: flex; align-items: center; overflow: hidden; }
.chan + .chan { border-top: 1px solid #000; }
.chan text { fill: #929292; font-size: 11px; }
.chan button { width: 22px; height: 18px; margin-left: 9px; background: #171717; border: 1px solid #333; border-radius: 3px; color: #2d8ceb; font: bold 9px/14px "Open Sans", sans-serif; }
.hscroll { height: 10px; flex: none; background: #303030; border: solid #000; border-width: 0 1px 1px; display: flex; align-items: center; justify-content: center; position: relative; }
.hscroll .dots { width: 26px; height: 4px; }
.hscroll .tri { position: absolute; right: 17px; border: 3px solid transparent; border-bottom-color: #888; border-top: 0; }
.transport { height: 37px; flex: none; display: flex; align-items: center; padding-left: 4px; }
.transport output { width: 234px; color: #2d8ceb; font-size: 16px; padding-top: 3px; }
.group { display: flex; color: #b4b4b4; }
.group button { width: 30px; height: 24px; }
.group .off { color: #4e4e4e; }
.zooms { margin-left: auto; margin-right: 3px; }

.sound { flex: 0 0 130px; color: #414141; }
.sound .tabs { padding-left: 12px; }
.sound .tab { gap: 14px; }
.lit { color: #c4c4c4; }
.state { margin: 7px 1px 0; padding: 2px 10px; border: solid #303030; border-width: 2px 0; height: 28px; line-height: 20px; }
.kind { padding: 7px 11px 14px; }
.types { display: flex; margin: 1px 2px 0 6px; border: 1px solid #303030; height: 23px; }
.types button { flex: 1; gap: 7px; }
.types button + button { border-left: 1px solid #303030; }
.preset { display: flex; align-items: center; margin: 24px 0 0 11px; height: 20px; }
.pick { width: 50px; height: 20px; background: #2a2a2a; display: flex; align-items: center; padding-right: 5px; }
.pick select { flex: 1; min-width: 0; }
.preset button { margin-left: 12px; }
.sound p { margin: 16px 0 0 11px; line-height: 13px; height: 149px; overflow: hidden; white-space: nowrap; color: #464646; }
.sound p span { display: block; }

.lower { flex: 0 0 90px; min-height: 0; display: flex; gap: 4px; }
.levels { flex: 1; padding: 0 6px 0 7px; }
.title { display: flex; align-items: center; gap: 10px; height: 28px; padding-left: 5px; color: #c4c4c4; }
.meter { margin-top: 4px; height: 45px; border: 1px solid #000; background: #1e1e1e; display: flex; justify-content: space-between; }
.yellow { width: 1px; background: #e5df25; margin-left: -1px; }
.peak { width: 10px; border-left: 1px solid #000; display: grid; grid-template-rows: 1fr 1fr; }
.peak i + i { border-top: 1px solid #000; }
.axis { position: relative; height: 14px; }
.axis span { position: absolute; top: 0; transform: translateX(-50%); font-size: 10px; line-height: 20px; }
.range { flex: 0 0 261px; padding-left: 7px; }
.range table { border-collapse: collapse; margin: 1px 0 0 5px; table-layout: fixed; width: 249px; line-height: 20px; }
.range th, .range td { padding: 0; font-weight: 400; text-align: left; width: 69px; height: 21px; white-space: nowrap; }
.range th:first-child { width: 43px; }
.range td { color: #2d8ceb; }
</style>
